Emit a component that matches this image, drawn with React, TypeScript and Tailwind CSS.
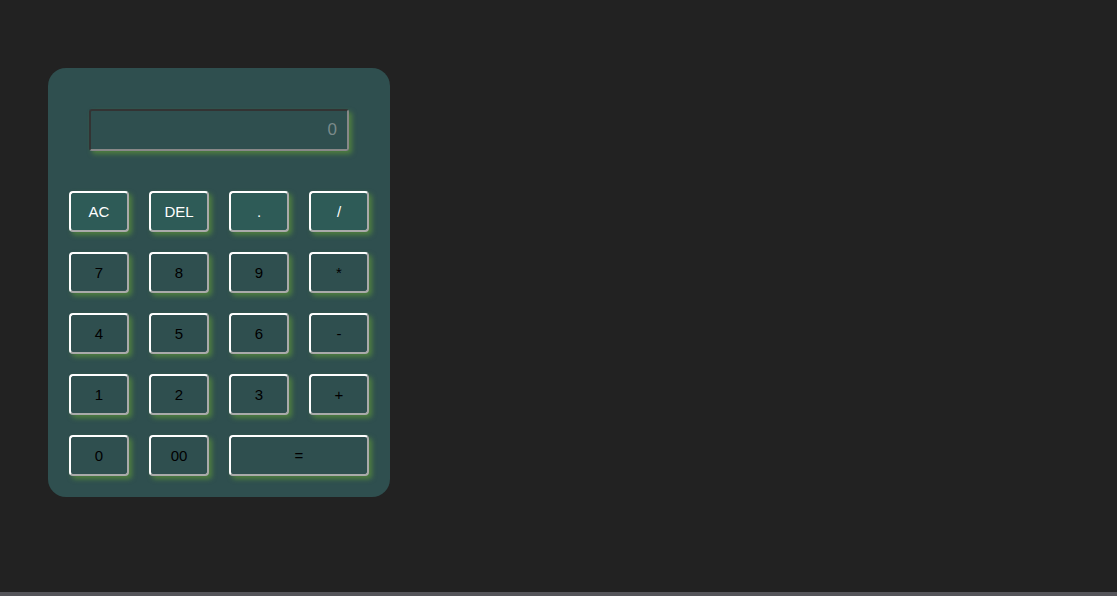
import React, { useState } from 'react';

const KEYS: { label: string; top?: boolean; wide?: boolean }[] = [
  { label: 'AC', top: true },
  { label: 'DEL', top: true },
  { label: '.', top: true },
  { label: '/', top: true },
  { label: '7' },
  { label: '8' },
  { label: '9' },
  { label: '*' },
  { label: '4' },
  { label: '5' },
  { label: '6' },
  { label: '-' },
  { label: '1' },
  { label: '2' },
  { label: '3' },
  { label: '+' },
  { label: '0' },
  { label: '00' },
  { label: '=', wide: true },
];

const App: React.FC = () => {
  const [value, setValue] = useState('');

  const press = (k: string) => {
    if (k === 'AC') return setValue('');
    if (k === 'DEL') return setValue(v => v.slice(0, -1));
    if (k === '=') return;
    setValue(v => v + k);
  };

  return (
    <div className="w-full bg-[#222222] font-['Liberation_Sans',Arial,sans-serif]">
      <div className="h-[592px] pt-[68px] pl-[48px]">
        <div className="w-[342px] rounded-[18px] bg-[#2f4f4f] px-[21px] pt-[41px] pb-[21px]">
          <div className="px-[20px] mb-[40px]">
            <input
              value={value}
              readOnly
              placeholder="0"
              className="w-[260px] h-[42px] rounded-[3px] border-2 border-t-[#333] border-l-[#333] border-r-[#888] border-b-[#888] bg-transparent px-[10px] text-right text-[17px] text-white placeholder:text-[#7a8a8a] outline-none shadow-[3px_3px_5px_#4f7f3f]"
            />
          </div>
          <div className="grid grid-cols-[60px_60px_60px_60px] gap-x-[20px] gap-y-[20px]">
            {KEYS.map(k => (
              <button
                key={k.label}
                onClick={() => press(k.label)}
                className={`h-[41px] pt-[2px] rounded-[4px] border-2 border-t-white border-l-white border-r-[#aaa] border-b-[#aaa] text-[15px] shadow-[3px_3px_5px_#4f7f3f] ${
                  k.top ? 'bg-[#2e5b57] text-white' : 'bg-[#2f4f4f] text-black'
                } ${k.wide ? 'col-span-2' : ''}`}
              >
                {k.label}
              </button>
            ))}
          </div>
        </div>
      </div>
      <div className="h-[4px] bg-[#55555a]" />
    </div>
  );
};

export default App;
